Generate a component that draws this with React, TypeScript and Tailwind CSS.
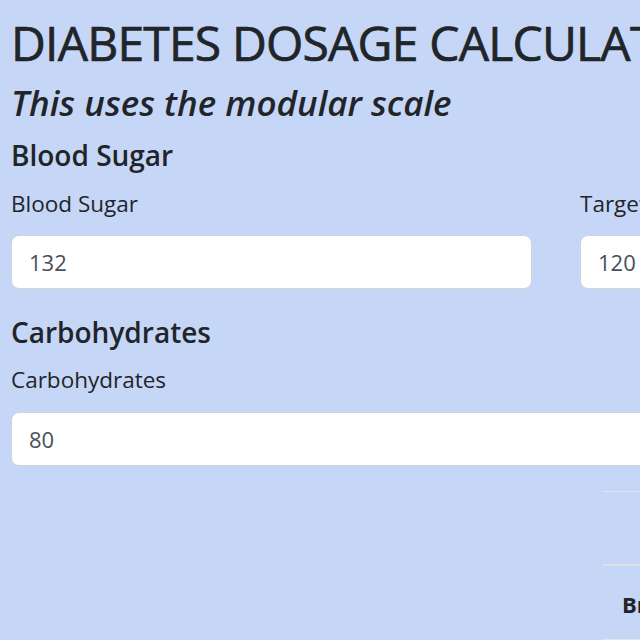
import React from "react";

const inputCls =
  "w-full h-[54px] bg-white border border-[#ced4da] rounded-[8px] px-[17px] text-[22px] text-[#495057] outline-none";

export default function App() {
  return (
    <div className="w-[640px] h-[640px] overflow-hidden bg-[#c6d6f7] text-[#212529]" style={{ fontFamily: '"Open Sans", "Noto Sans", sans-serif' }}>
      <div className="w-[1120px] pl-[11px] flex flex-col">
        <h1 className="text-[48px] leading-[58px] font-normal mt-[14px] whitespace-nowrap tracking-[-0.8px] [-webkit-text-stroke:0.7px_#212529]">DIABETES DOSAGE CALCULATOR</h1>
        <h2 className="text-[35px] leading-[40px] italic font-semibold mt-[11px] whitespace-nowrap">This uses the modular scale</h2>
        <h3 className="text-[28px] leading-[32px] font-semibold mt-[16px]">Blood Sugar</h3>
        <div className="flex gap-[48px] mt-[18px]">
          <div className="w-[521px] flex flex-col">
            <label className="block text-[22.5px] leading-[30px]">Blood Sugar</label>
            <input readOnly value="132" className={"mt-[16px] " + inputCls} />
          </div>
          <div className="w-[521px] flex flex-col">
            <label className="block text-[22.5px] leading-[30px]">Target</label>
            <input readOnly value="120" className={"mt-[16px] " + inputCls} />
          </div>
        </div>
        <h3 className="text-[28px] leading-[32px] font-semibold mt-[27px]">Carbohydrates</h3>
        <label className="block text-[22.5px] leading-[30px] mt-[17px]">Carbohydrates</label>
        <input readOnly value="80" className={"mt-[17px] !w-[1090px] " + inputCls} />
        <div className="ml-[591px] mt-[25px] w-[500px]">
          <div className="border-t border-[#dfe5f0] h-[73px]"></div>
          <div className="border-t-[2px] border-[#dcdfe4]">
            <div className="pl-[20px] pt-[26px] pb-[23px] text-[22px] font-bold leading-[24px]">Breakdown</div>
          </div>
          <div className="border-t border-[#dfe5f0]"></div>
        </div>
      </div>
    </div>
  );
}
